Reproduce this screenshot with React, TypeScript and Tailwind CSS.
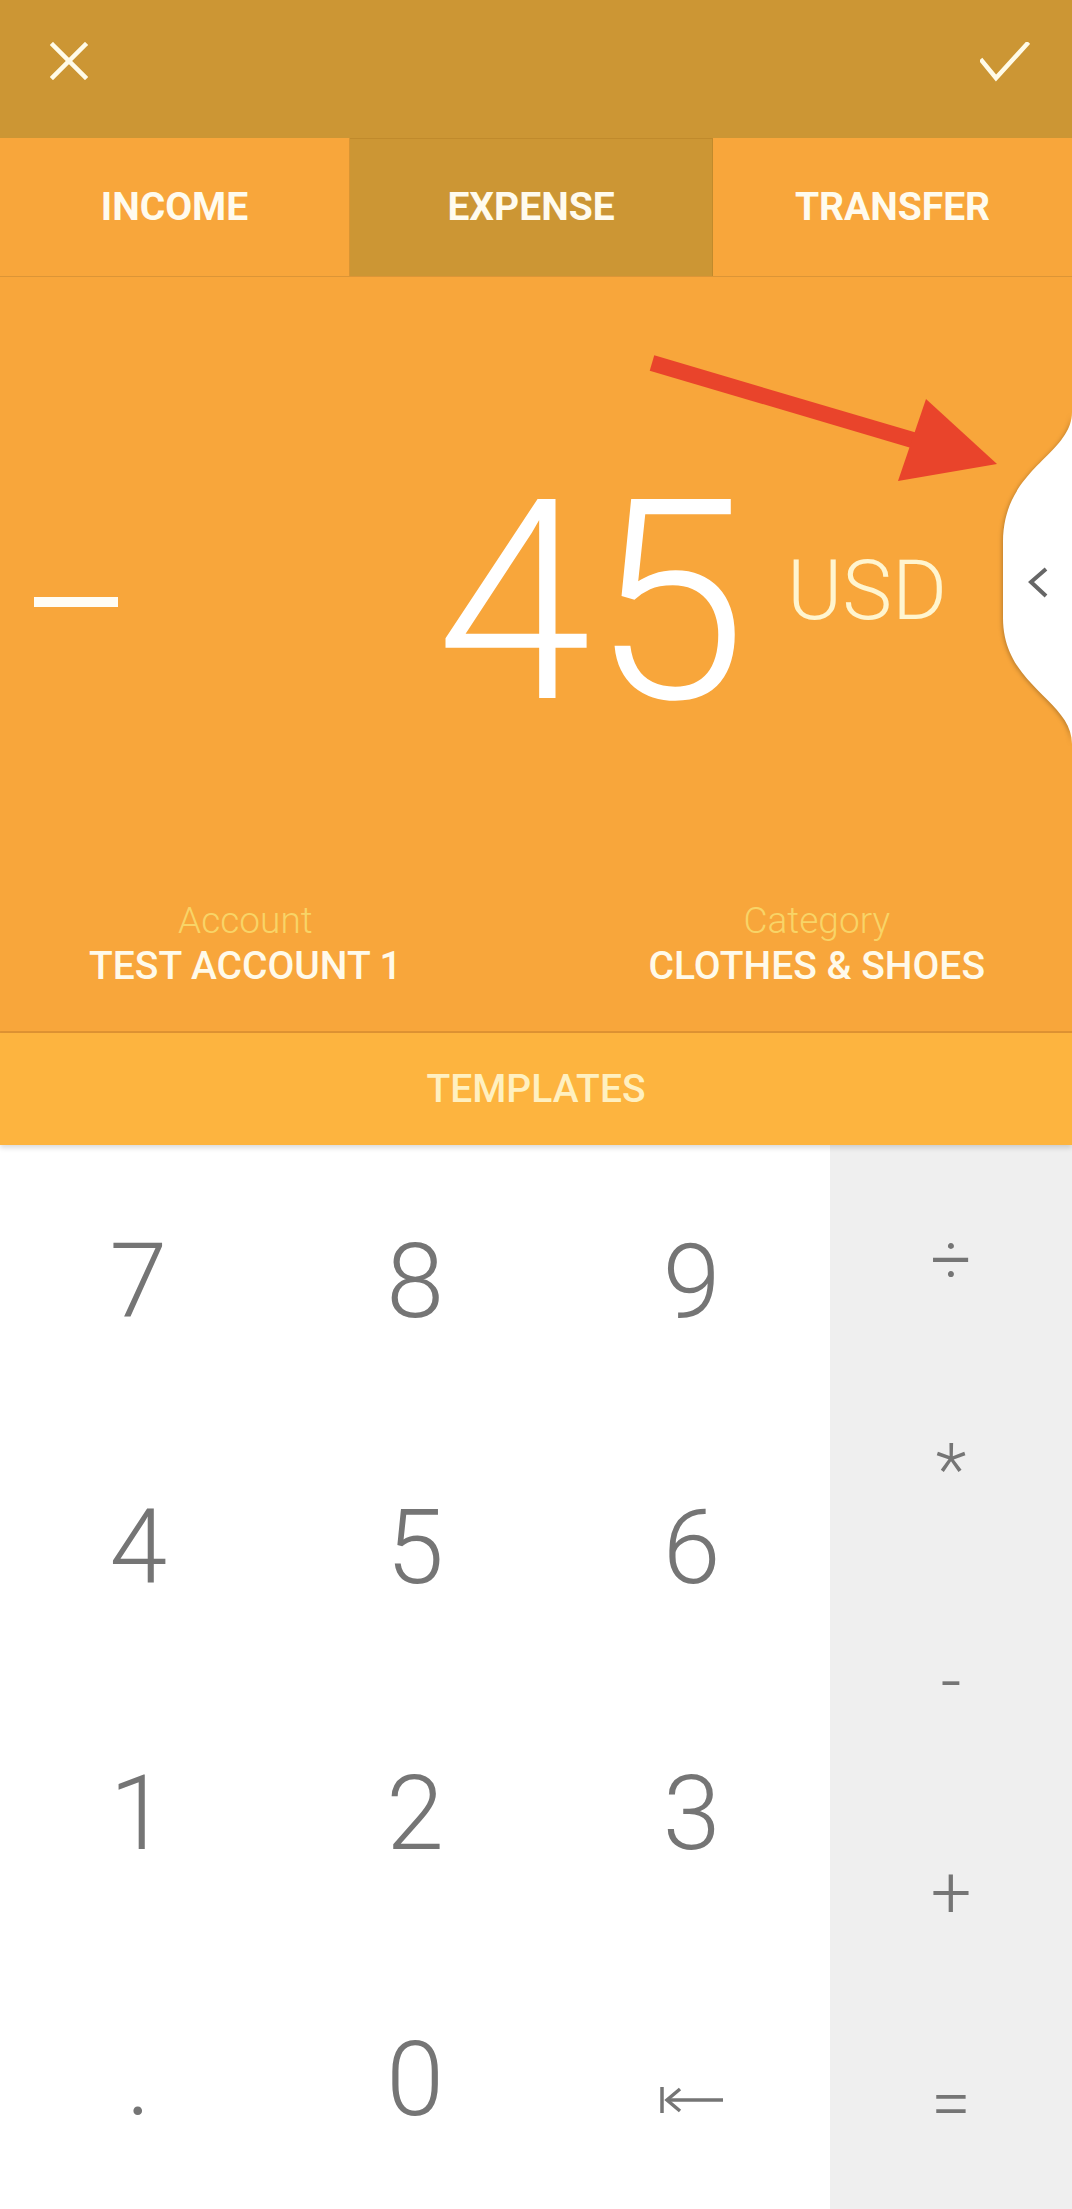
import React from 'react';

const KEYS = ['7', '8', '9', '4', '5', '6', '1', '2', '3', '.', '0', 'back'];
const OPS = ['÷', '*', '-', '+', '='];

const CloseIcon = () => (
  <svg width="38" height="38" viewBox="0 0 38 38" fill="none" stroke="#fffbe8" strokeWidth="4.5" strokeLinecap="square">
    <line x1="3" y1="3" x2="35" y2="35" />
    <line x1="35" y1="3" x2="3" y2="35" />
  </svg>
);

const CheckIcon = () => (
  <svg width="50" height="40" viewBox="0 0 50 40" fill="none" stroke="#fffbe8" strokeWidth="4.5" strokeLinecap="square">
    <polyline points="2,19 16,36 47,2" />
  </svg>
);

const BackIcon = () => (
  <svg width="64" height="28" viewBox="0 0 64 28" fill="none" stroke="#757575" strokeWidth="3.5">
    <line x1="2" y1="1" x2="2" y2="27" />
    <line x1="7" y1="14" x2="63" y2="14" />
    <polyline points="20,3 7,14 20,25" strokeLinejoin="miter" />
  </svg>
);

// white pull tab on the right edge of the amount panel
const SideTab = () => (
  <svg
    width="72"
    height="336"
    viewBox="0 0 72 336"
    className="absolute right-0 top-[133px] drop-shadow-[-1px_1px_2px_rgba(0,0,0,0.25)]"
  >
    <path d="M72,2 C72,45 3,58 3,132 L3,208 C3,276 72,290 72,334 Z" fill="#ffffff" />
    <polyline points="46,159 31,172 46,186" fill="none" stroke="#666666" strokeWidth="4" />
  </svg>
);

// annotation arrow drawn over the screenshot
const RedArrow = () => (
  <svg width="1072" height="756" viewBox="0 0 1072 756" className="absolute left-0 top-0 pointer-events-none">
    <line x1="652" y1="86" x2="916" y2="164" stroke="#e9442b" strokeWidth="16" />
    <polygon points="997,187 926,122 898,204" fill="#e9442b" />
  </svg>
);

export default function App() {
  return (
    <div className="w-[1072px] h-[2209px] overflow-hidden bg-white font-[Roboto,sans-serif]">
      {/* top bar */}
      <div className="h-[138px] bg-[#cc9634] flex items-start justify-between pl-[50px] pr-[42px] pt-[42px]">
        <CloseIcon />
        <CheckIcon />
      </div>

      {/* type tabs */}
      <div className="h-[139px] bg-[#f8a63b] flex border-b border-[#dc9536] text-[39px] font-bold text-[#fffbee]">
        <div className="w-[350px] flex items-center justify-center border-r border-[#d99533]">INCOME</div>
        <div className="w-[363px] flex items-center justify-center bg-[#cc9634] border-r border-t border-[#c08a2c]">
          EXPENSE
        </div>
        <div className="flex-1 flex items-center justify-center">TRANSFER</div>
      </div>

      {/* amount panel */}
      <div className="relative h-[756px] bg-[#f8a63b] border-b-2 border-[#df9333] flex flex-col">
        <div className="mt-[185px] h-[280px] flex items-center pl-[34px] pr-[125px]">
          <div className="w-[84px] h-[10px] bg-[#fffdf5]" aria-label="minus" />
          <div className="flex-1" />
          <span className="text-[280px] leading-none font-light text-white">45</span>
          <span className="ml-[40px] mb-[22px] text-[84px] leading-none font-light text-[#fff5cf]">USD</span>
        </div>

        <div className="mt-[159px] flex justify-between pl-[89px] pr-[87px]">
          <div className="flex flex-col items-center">
            <span className="text-[37px] leading-[40px] font-light text-[#f8d467]">Account</span>
            <span className="mt-[3px] text-[39px] leading-[44px] font-medium text-[#fffaea]">TEST ACCOUNT 1</span>
          </div>
          <div className="flex flex-col items-center">
            <span className="text-[37px] leading-[40px] font-light text-[#f8d467]">Category</span>
            <span className="mt-[3px] text-[39px] leading-[44px] font-medium text-[#fffaea]">CLOTHES &amp; SHOES</span>
          </div>
        </div>

        <SideTab />
        <RedArrow />
      </div>

      {/* templates */}
      <div className="relative z-10 h-[112px] bg-[#fdb43f] flex items-center justify-center text-[39px] font-medium text-[#fff0c0] shadow-[0_3px_5px_rgba(0,0,0,0.14)]">
        TEMPLATES
      </div>

      {/* keypad */}
      <div className="h-[1064px] flex">
        <div className="w-[830px] grid grid-cols-3 grid-rows-4 bg-white">
          {KEYS.map((k) => (
            <div key={k} className="flex items-center justify-center pt-[8px] text-[104px] leading-none font-light text-[#757575]">
              {k === 'back' ? (
                <div className="mt-[40px]">
                  <BackIcon />
                </div>
              ) : (
                k
              )}
            </div>
          ))}
        </div>
        <div className="flex-1 bg-[#efefef] flex flex-col pt-[10px]">
          {OPS.map((o) => (
            <div key={o} className="flex-1 flex items-center justify-center text-[72px] leading-none font-light text-[#757575]">
              {o}
            </div>
          ))}
        </div>
      </div>
    </div>
  );
}
